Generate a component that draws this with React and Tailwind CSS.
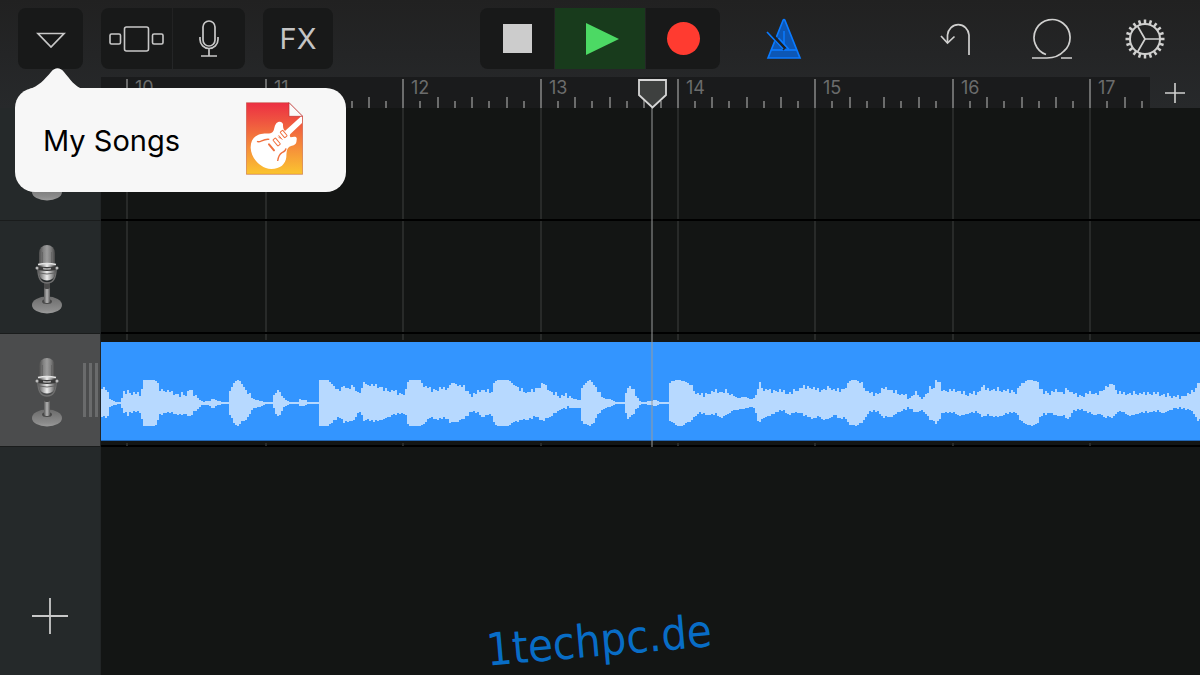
import { useMemo } from 'react';

const BARS = [
  { number: 10, width: 139 },
  { number: 11, width: 137 },
  { number: 12, width: 138 },
  { number: 13, width: 137 },
  { number: 14, width: 137 },
  { number: 15, width: 138 },
  { number: 16, width: 137 },
  { number: 17, width: 138 },
];

// [x, height above the centre line, height below it], in thirds of a pixel
const ENVELOPE = [
  [0, 42, 43], [20, 42, 43], [27, 12, 13], [39, 6, 7], [52, 3, 3], [63, 3, 3], [65, 29, 26], [84, 36, 39], [89, 27, 29],
  [112, 26, 27], [122, 21, 27], [125, 54, 51], [129, 69, 69], [165, 69, 69], [177, 42, 39], [197, 35, 29], [210, 31, 29],
  [237, 22, 28], [259, 26, 31], [265, 42, 45], [282, 24, 28], [305, 4, 6], [327, 6, 7], [337, 15, 17], [352, 5, 5],
  [385, 3, 3], [388, 34, 36], [402, 64, 64], [412, 69, 69], [419, 67, 61], [437, 34, 41], [457, 12, 16], [477, 7, 11],
  [497, 3, 3], [517, 3, 3], [521, 24, 21], [530, 42, 36], [542, 26, 21], [559, 5, 5], [592, 3, 3], [597, 11, 9],
  [617, 9, 7], [622, 3, 3], [652, 3, 3], [653, 64, 69], [659, 69, 69], [683, 69, 69], [697, 54, 56], [715, 33, 43],
  [729, 49, 56], [732, 64, 59], [737, 41, 46], [762, 49, 49], [769, 31, 31], [782, 29, 28], [789, 64, 54], [797, 54, 49],
  [822, 51, 58], [842, 47, 43], [852, 37, 41], [877, 37, 36], [897, 27, 34], [915, 29, 31], [918, 54, 56], [925, 69, 69],
  [959, 69, 69], [972, 49, 59], [987, 41, 46], [1007, 39, 51], [1042, 44, 43], [1055, 62, 59], [1077, 51, 51],
  [1092, 47, 49], [1112, 21, 27], [1127, 29, 29], [1142, 39, 36], [1152, 37, 31], [1172, 27, 28], [1177, 51, 51],
  [1187, 69, 69], [1224, 69, 69], [1242, 54, 51], [1262, 36, 43], [1282, 31, 51], [1307, 41, 43], [1329, 57, 56],
  [1342, 41, 43], [1357, 27, 26], [1377, 19, 19], [1397, 23, 17], [1422, 12, 14], [1439, 9, 16], [1442, 47, 49],
  [1457, 62, 63], [1467, 69, 69], [1477, 62, 61], [1492, 34, 36], [1507, 14, 19], [1527, 12, 11], [1547, 3, 4],
  [1573, 3, 3], [1576, 31, 26], [1582, 47, 46], [1589, 47, 43], [1602, 34, 31], [1617, 6, 7], [1627, 3, 3],
  [1652, 7, 7], [1667, 10, 8], [1677, 4, 3], [1704, 4, 4], [1706, 59, 53], [1717, 67, 59], [1732, 69, 69],
  [1747, 67, 69], [1767, 59, 51], [1777, 37, 41], [1797, 23, 31], [1822, 27, 38], [1847, 35, 34], [1862, 31, 36],
  [1877, 33, 31], [1907, 16, 21], [1937, 17, 16], [1952, 11, 11], [1967, 21, 21], [1971, 44, 46], [1977, 57, 53],
  [1987, 39, 43], [2012, 37, 39], [2037, 37, 24], [2062, 27, 26], [2087, 36, 24], [2112, 49, 39], [2137, 44, 49],
  [2157, 36, 40], [2187, 44, 43], [2202, 37, 36], [2217, 38, 51], [2232, 42, 43], [2247, 67, 65], [2270, 69, 69],
  [2287, 49, 51], [2307, 29, 26], [2332, 27, 26], [2347, 41, 46], [2365, 41, 38], [2387, 29, 26], [2412, 23, 21],
  [2429, 16, 17], [2445, 32, 31], [2463, 12, 21], [2475, 24, 21], [2487, 41, 43], [2499, 44, 49], [2506, 69, 63],
  [2517, 59, 49], [2527, 36, 31], [2572, 35, 29], [2597, 24, 29], [2632, 31, 29], [2642, 41, 43], [2647, 64, 43],
  [2652, 39, 39], [2677, 39, 33], [2702, 37, 36], [2732, 36, 31], [2747, 29, 29], [2757, 49, 51], [2777, 67, 65],
  [2795, 69, 69], [2812, 63, 61], [2819, 39, 41], [2847, 27, 31], [2869, 36, 39], [2887, 29, 27], [2901, 39, 47],
  [2917, 29, 26], [2942, 19, 21], [2967, 29, 31], [2997, 27, 26], [3015, 47, 46], [3025, 47, 39], [3030, 64, 46],
  [3042, 47, 39], [3052, 29, 28], [3082, 27, 29], [3112, 26, 31], [3137, 29, 31], [3182, 25, 23], [3217, 18, 16],
  [3247, 19, 19], [3267, 27, 21], [3282, 39, 31], [3295, 61, 49], [3300, 61, 49],
];

const ROUGHNESS = [0, 2, -1, 0, 1, -1, 3, 0, -1, 1, 0, 2, -2, 1, 0, -1, 2];

const WAVE_WIDTH = 1099;
const WAVE_CENTER = 61;

function waveSamples() {
  const samples = [];
  let k = 0;
  for (let x = 0; x < WAVE_WIDTH; x += 2) {
    const pos = x * 3 + 4;
    while (k < ENVELOPE.length - 2 && ENVELOPE[k + 1][0] <= pos) k += 1;
    const [x0, u0, d0] = ENVELOPE[k];
    const [x1, u1, d1] = ENVELOPE[k + 1];
    const t = Math.min(1, (pos - x0) / (x1 - x0));
    let up = (u0 + (u1 - u0) * t) / 3;
    let down = (d0 + (d1 - d0) * t) / 3;
    // roughen the sustained parts, leave silence and clipped peaks flat
    if (up > 6 && up < 19) {
      const i = x / 2;
      up += ROUGHNESS[i % 17];
      down += ROUGHNESS[(i * 5 + 3) % 17];
    }
    samples.push({ x, up: Math.round(up), down: Math.round(down) });
  }
  return samples;
}

function Waveform() {
  const path = useMemo(() => {
    const samples = waveSamples();
    const top = samples.map((s) => `L${s.x} ${WAVE_CENTER - s.up}h2`).join('');
    const bottom = [...samples]
      .reverse()
      .map((s) => `L${s.x + 2} ${WAVE_CENTER + s.down}h-2`)
      .join('');
    return `M0 ${WAVE_CENTER}${top}${bottom}Z`;
  }, []);

  return (
    <svg viewBox="0 0 1099 98" preserveAspectRatio="none" className="block h-full w-full" aria-hidden="true">
      <path d={path} fill="#b7d9ff" />
    </svg>
  );
}

function StudioMic() {
  return (
    <svg width="32" height="70" viewBox="0 0 32 70" aria-hidden="true">
      <defs>
        <linearGradient id="capsule" x1="0" x2="1" y1="0" y2="0">
          <stop offset="0" stopColor="#4c4c4c" />
          <stop offset="0.3" stopColor="#868686" />
          <stop offset="0.5" stopColor="#9c9c9c" />
          <stop offset="0.75" stopColor="#7d7d7d" />
          <stop offset="1" stopColor="#454545" />
        </linearGradient>
        <linearGradient id="bowl" x1="0" x2="1" y1="0" y2="0">
          <stop offset="0" stopColor="#5a5a5a" />
          <stop offset="0.5" stopColor="#ededed" />
          <stop offset="1" stopColor="#555" />
        </linearGradient>
        <linearGradient id="stem" x1="0" x2="1" y1="0" y2="0">
          <stop offset="0" stopColor="#5a5a5a" />
          <stop offset="0.5" stopColor="#b4b4b4" />
          <stop offset="1" stopColor="#5c5c5c" />
        </linearGradient>
        <linearGradient id="base" x1="0" x2="0" y1="0" y2="1">
          <stop offset="0" stopColor="#6c6c6c" />
          <stop offset="0.8" stopColor="#8c8c8c" />
          <stop offset="1" stopColor="#9c9c9c" />
        </linearGradient>
      </defs>
      <ellipse cx="16" cy="60" rx="15" ry="8.5" fill="url(#base)" />
      <ellipse cx="16" cy="56.5" rx="5" ry="2.5" fill="#484848" />
      <rect x="13" y="40" width="6" height="18" rx="2" fill="url(#stem)" />
      <rect x="13" y="37" width="6" height="7" rx="2" fill="#4a4a4a" />
      <path d="M7 24C7 34 10 38 16 38S25 34 25 24" fill="none" stroke="#6f6f6f" strokeWidth="1.5" />
      <path d="M8 19V8a8 8 0 0 1 16 0v11z" fill="url(#capsule)" />
      <path d="M11.5 18V7M20.5 18V7" stroke="#666" />
      <path d="M7.5 19h17v7c0 6-3 9.5-8.5 9.5S7.5 32 7.5 26z" fill="url(#bowl)" />
      <path d="M7.5 21q8.5 2 17 0v4q-8.5 2-17 0z" fill="#3a3a3a" />
      <path d="M12 23.5q4 1 8 0" stroke="#aaa" strokeWidth="1.5" fill="none" />
      <path d="M8 28q8 2 16 0" stroke="#666" fill="none" />
      <path d="M7 19.5q9-2 18 0" stroke="#e4e4e4" strokeWidth="1.5" fill="none" />
      <circle cx="6" cy="23" r="1.5" fill="#bbb" />
      <circle cx="26" cy="23" r="1.5" fill="#bbb" />
    </svg>
  );
}

function SongFileIcon() {
  return (
    <svg width="57" height="73" viewBox="0 0 171 217" aria-hidden="true">
      <defs>
        <linearGradient id="paper" x1="0" x2="0" y1="0" y2="1">
          <stop offset="0" stopColor="#ec2f43" />
          <stop offset="0.25" stopColor="#ef5340" />
          <stop offset="0.65" stopColor="#f6913a" />
          <stop offset="1" stopColor="#fbc52f" />
        </linearGradient>
      </defs>
      <path d="M1 1H129L170 42V216H1Z" fill="url(#paper)" stroke="#b8452f" strokeOpacity="0.7" strokeWidth="2" />
      <path d="M129 1L170 42H129Z" fill="#fafafa" stroke="#b33" strokeWidth="2" />
      <path
        d="M164 43L117 86C111 81 111 74 111 66C109 56 97 56 90 64C84 71 86 82 80 89C72 96 60 92 45 95C25 99 13 115 14 137C15 165 40 198 76 200C103 200 119 185 121 164C122 150 121 140 130 133C140 127 151 132 152 112C154 102 145 102 134 105C130 101 131 97 134 94L168 62V43Z"
        fill="#fff"
      />
      <g fill="none" stroke="#f0713f" strokeWidth="3">
        <rect x="-11" y="-5" width="22" height="10" rx="2" transform="translate(113 95) rotate(50)" />
        <rect x="-12" y="-5" width="24" height="10" rx="2" transform="translate(92 119) rotate(50)" />
        <path d="M98 99L109 112M103 109L97 103" />
        <path d="M69 126L84 144" strokeWidth="6" strokeLinecap="round" />
        <path d="M33 117C43 123 50 108 70 111M95 176C97 163 99 156 108 151C115 148 119 147 120 138" strokeWidth="4" />
      </g>
    </svg>
  );
}

function GearIcon() {
  const teeth = Array.from({ length: 20 }, (_, i) => i * 18);
  return (
    <svg width="40" height="40" viewBox="0 0 40 40" fill="none" stroke="#d0d0cf" aria-hidden="true">
      <circle cx="20" cy="20" r="15" strokeWidth="2" />
      {teeth.map((angle) => (
        <path key={angle} d="M35 20H39.5" strokeWidth="2.5" transform={`rotate(${angle} 20 20)`} />
      ))}
      <path d="M20 20H35M20 20L12.5 7M20 20L12.5 33" strokeWidth="1.7" />
    </svg>
  );
}

function SongsPopover() {
  return (
    <div className="absolute -left-[3px] top-20 z-20 w-[331px]">
      <svg
        width="56"
        height="23"
        viewBox="0 0 56 23"
        className="absolute left-[14px] -top-[21px]"
        aria-hidden="true"
      >
        <path d="M0 22C9 20 16 12 22 5C26 0 31 0 35 5C41 12 46 20 54 22V23H0Z" fill="#f7f7f7" />
      </svg>
      <button
        type="button"
        className="flex h-[104px] w-full items-start justify-between rounded-[20px] bg-[#f7f7f7] pl-7 pr-[43px] pt-[14px] text-[29px] text-black"
      >
        <span className="leading-[78px]">My Songs</span>
        <SongFileIcon />
      </button>
    </div>
  );
}

function Toolbar() {
  return (
    <div className="grid h-[77px] grid-cols-[1fr_auto_1fr] pt-2">
      <div className="flex gap-[18px] pl-[18px]">
        <div className="relative">
          <button
            type="button"
            aria-label="Song menu"
            className="flex h-[61px] w-[65px] items-center justify-center rounded-lg bg-[#181919]"
          >
            <svg width="30" height="18" viewBox="0 0 30 18" fill="none" aria-hidden="true">
              <path d="M2 3.5H28L15 17Z" stroke="#c8c8c8" strokeWidth="1.7" />
            </svg>
          </button>
          <SongsPopover />
        </div>
        <div className="flex gap-px">
          <button
            type="button"
            aria-label="Browser"
            className="flex h-[61px] w-[71px] items-center justify-center rounded-l-lg bg-[#181919]"
          >
            <svg width="56" height="26" viewBox="0 0 56 26" fill="none" stroke="#c8c8c8" strokeWidth="1.6" aria-hidden="true">
              <rect x="1" y="8" width="10.5" height="10" rx="1.5" />
              <rect x="15.5" y="1" width="24" height="24" rx="2" />
              <rect x="43.5" y="8" width="10.5" height="10" rx="1.5" />
            </svg>
          </button>
          <button
            type="button"
            aria-label="Audio recorder"
            className="flex h-[61px] w-[72px] items-center justify-center rounded-r-lg bg-[#181919]"
          >
            <svg width="22" height="38" viewBox="0 0 22 38" fill="none" stroke="#c8c8c8" strokeWidth="1.7" aria-hidden="true">
              <rect x="5" y="1" width="12" height="25" rx="6" />
              <path d="M2 17V19.5A9 9 0 0 0 20 19.5V17M11 29V36M3 36H19" />
            </svg>
          </button>
        </div>
        <button type="button" className="h-[61px] w-[70px] rounded-lg bg-[#181919] text-[29px] text-[#c4c4c4]">
          FX
        </button>
      </div>

      <div className="flex h-[61px] w-60 gap-px overflow-hidden rounded-lg">
        <button type="button" aria-label="Stop" className="flex w-[74px] items-center justify-center bg-[#181919]">
          <span className="size-[29px] bg-[#cccccc]" />
        </button>
        <button type="button" aria-label="Play" className="flex flex-1 items-center justify-center bg-[#183b1c] pl-1">
          <svg width="33" height="34" viewBox="0 0 33 34" aria-hidden="true">
            <path d="M0 1L33 17L0 33Z" fill="#4cd964" />
          </svg>
        </button>
        <button type="button" aria-label="Record" className="flex w-[74px] items-center justify-center bg-[#181919]">
          <span className="size-[33px] rounded-full bg-[#ff3b30]" />
        </button>
      </div>

      <div className="flex h-[61px] items-center pl-[46px] pr-[35px]">
        <button type="button" aria-label="Metronome">
          <svg width="36" height="42" viewBox="0 0 36 42" fill="none" aria-hidden="true">
            <path d="M2 40L17 2.5Q18 0.5 19 2.5L34 40Z" fill="#0d57b5" stroke="#0a7aff" strokeWidth="1.7" />
            <path d="M5 32H31" stroke="#0a7aff" strokeWidth="1.7" />
            <path d="M18 13V26" stroke="#0a7aff" strokeWidth="1.5" />
            <path d="M6 17.5L19 31" stroke="#1d2023" strokeWidth="4" />
            <path d="M1 14L17 31M12.5 20L23 31.5" stroke="#0a7aff" strokeWidth="1.7" />
          </svg>
        </button>
        <div className="ml-auto flex items-center gap-[53px]">
          <button type="button" aria-label="Undo" className="pr-2">
            <svg width="31" height="34" viewBox="0 0 31 34" fill="none" stroke="#d0d0cf" strokeWidth="1.7" aria-hidden="true">
              <path d="M7.5 21V13A10.8 11.5 0 0 1 29 13V33" />
              <path d="M1 14L7.5 21L14.5 14.5" />
            </svg>
          </button>
          <button type="button" aria-label="Loop browser">
            <svg width="40" height="42" viewBox="0 0 40 42" fill="none" stroke="#d0d0cf" strokeWidth="1.7" aria-hidden="true">
              <path d="M14 36.5A18 18 0 1 1 32 33C27 38.5 22 40 15 40H0M29 40H40" />
            </svg>
          </button>
          <button type="button" aria-label="Settings">
            <GearIcon />
          </button>
        </div>
      </div>
    </div>
  );
}

function Ruler() {
  return (
    <div className="flex h-[31px]">
      <div className="w-[101px] shrink-0" />
      <div className="relative min-w-0 flex-1 bg-[#1a1b1c]">
        <div className="flex h-full overflow-hidden pl-[25px]">
          {BARS.map((bar) => (
            <div key={bar.number} className="relative flex shrink-0 items-end" style={{ width: bar.width }}>
              <div className="h-[29px] flex-1 border-l-2 border-[#6b6c6c]" />
              {[1, 2, 3, 4, 5, 6, 7].map((n) => (
                <div key={n} className={`flex-1 border-l-2 border-[#6b6c6c] ${n % 2 ? 'h-[7px]' : 'h-[11px]'}`} />
              ))}
              <span className="absolute left-[9px] top-0 text-[18px] leading-[22px] text-[#6b6c6c]">{bar.number}</span>
            </div>
          ))}
        </div>
        <div className="absolute left-[550px] top-7 z-10 h-[342px] w-[2px] bg-[#9a9b9b]/50" />
        <svg width="31" height="31" viewBox="0 0 31 31" className="absolute left-[536px] top-[1px] z-10" aria-hidden="true">
          <path d="M2 2H29V17L15.5 29.5L2 17Z" fill="#3e403f" stroke="#d6d6d6" strokeWidth="1.8" />
        </svg>
      </div>
      <button type="button" aria-label="Add section" className="flex w-[50px] shrink-0 items-center justify-center">
        <svg width="20" height="20" viewBox="0 0 20 20" stroke="#d0d0cf" strokeWidth="1.6" aria-hidden="true">
          <path d="M10 0V20M0 10H20" />
        </svg>
      </button>
    </div>
  );
}

function GridLines() {
  return (
    <div className="col-start-1 row-start-1 flex overflow-hidden pl-[25px]">
      {BARS.map((bar) => (
        <div key={bar.number} className="shrink-0 border-l-2 border-[#282a29]" style={{ width: bar.width }} />
      ))}
    </div>
  );
}

function Track({ selected, children }) {
  return (
    <div className="flex h-[113px]">
      <button
        type="button"
        aria-label="Audio track"
        className={`flex w-[101px] shrink-0 items-start justify-between border-b border-r border-b-[#1a1c1c] border-r-[#222526] pl-[31px] pt-6 ${
          selected ? 'bg-[#4b4c4d]' : 'bg-[#25292a]'
        }`}
      >
        <StudioMic />
        {selected && (
          <span className="mr-[2px] mt-[5px] flex h-[54px] gap-[3px]">
            <span className="w-[3px] bg-[#6a6b6c]" />
            <span className="w-[3px] bg-[#6a6b6c]" />
            <span className="w-[3px] bg-[#6a6b6c]" />
          </span>
        )}
      </button>
      <div className="grid min-w-0 flex-1 border-b-2 border-black">
        <GridLines />
        {children}
      </div>
    </div>
  );
}

export default function App() {
  return (
    <div className="flex min-h-screen flex-col bg-[#131514] font-['Inter','Liberation_Sans',sans-serif]">
      <header className="bg-linear-to-b from-[#212121] to-[#27292b]">
        <Toolbar />
        <Ruler />
      </header>

      <main className="flex flex-1 flex-col">
        <Track />
        <Track />
        <Track selected>
          <div className="col-start-1 row-start-1 mb-[3px] mt-[6px] bg-[#131514] py-[2px]">
            <div className="h-[99px] border-b border-[#2367b5] bg-[#3395ff]">
              <Waveform />
            </div>
          </div>
        </Track>
        <div className="flex flex-1">
          <div className="flex w-[101px] shrink-0 flex-col justify-end border-r border-[#222526] bg-[#25292a] pb-10">
            <button type="button" aria-label="Add track" className="self-center">
              <svg width="38" height="38" viewBox="0 0 38 38" stroke="#c8c8c8" strokeWidth="1.8" aria-hidden="true">
                <path d="M19 1V37M1 19H37" />
              </svg>
            </button>
          </div>
          <div className="flex flex-1 items-end justify-center pb-3 pr-[103px]">
            <p className="-rotate-5 font-['DejaVu_Sans_Condensed','DejaVu_Sans',sans-serif] text-[45px] leading-none text-[#086dc6] [font-stretch:condensed]">
              1techpc.de
            </p>
          </div>
        </div>
      </main>
    </div>
  );
}
